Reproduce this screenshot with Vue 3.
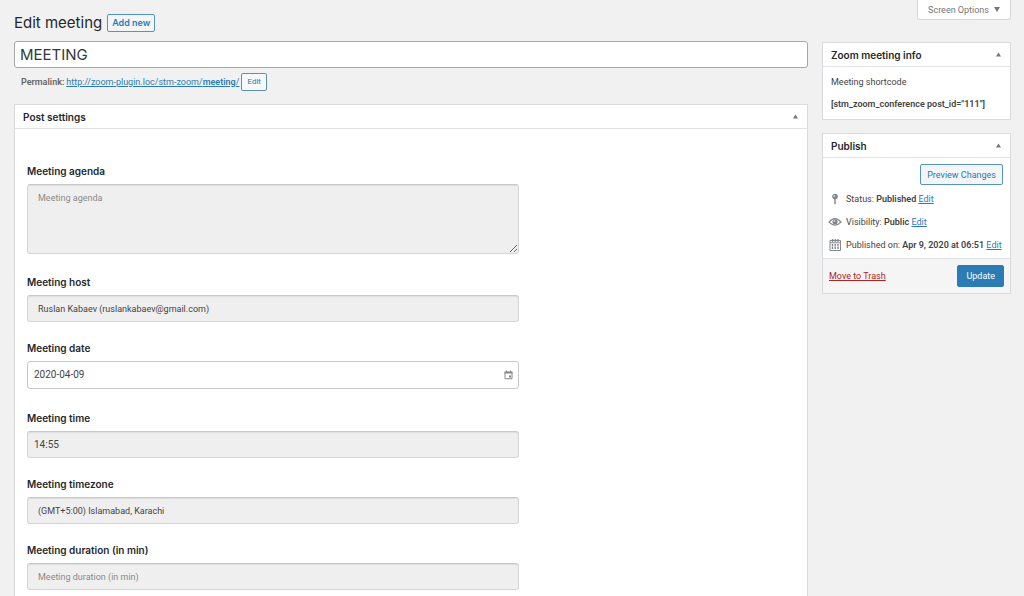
<script setup>
import { ref } from 'vue'

const title = ref('MEETING')
const agenda = ref('')
const host = ref('Ruslan Kabaev (ruslankabaev@gmail.com)')
const date = ref('2020-04-09')
const time = ref('14:55')
const timezone = ref('(GMT+5:00) Islamabad, Karachi')
const duration = ref('')
</script>

<template>
  <div class="wrap">
    <header class="top">
      <h1>Edit meeting</h1>
      <a href="#" class="add-new">Add new</a>
      <button type="button" class="screen-options">
        Screen Options
        <svg width="6" height="5" viewBox="0 0 6 5"><path d="M0 0h6L3 5z" fill="currentColor" /></svg>
      </button>
    </header>

    <div class="columns">
      <main class="main">
        <input v-model="title" class="title" type="text" aria-label="Title" />
        <div class="permalink">
          <strong>Permalink:</strong>
          <a href="#">http://zoom-plugin.loc/stm-zoom/<b>meeting</b>/</a>
          <button type="button" class="slug-edit">Edit</button>
        </div>

        <section class="box settings">
          <div class="box-head">
            <h2>Post settings</h2>
            <button type="button" class="toggle" aria-label="Toggle post settings">
              <svg width="5" height="5" viewBox="0 0 6 5"><path d="M0 5h6L3 0z" fill="currentColor" /></svg>
            </button>
          </div>
          <div class="fields">
            <div class="field agenda">
              <label for="agenda">Meeting agenda</label>
              <textarea id="agenda" v-model="agenda" placeholder="Meeting agenda"></textarea>
            </div>
            <div class="field">
              <label for="host">Meeting host</label>
              <select id="host" v-model="host" class="control indent">
                <option>Ruslan Kabaev (ruslankabaev@gmail.com)</option>
              </select>
            </div>
            <div class="field date">
              <label for="date">Meeting date</label>
              <div class="date-box">
                <input id="date" v-model="date" type="text" />
                <svg width="9" height="10" viewBox="0 0 18 20">
                  <path d="M2 4.5h14v13H2z" fill="none" stroke="#888" stroke-width="2" />
                  <path d="M1 3h16v4H1zM4 1h2v3H4zM12 1h2v3h-2zM10 11h4v4h-4z" fill="#888" />
                </svg>
              </div>
            </div>
            <div class="field">
              <label for="time">Meeting time</label>
              <input id="time" v-model="time" class="control time" type="text" />
            </div>
            <div class="field">
              <label for="timezone">Meeting timezone</label>
              <select id="timezone" v-model="timezone" class="control indent">
                <option>(GMT+5:00) Islamabad, Karachi</option>
              </select>
            </div>
            <div class="field">
              <label for="duration">Meeting duration (in min)</label>
              <input id="duration" v-model="duration" class="control indent" type="text" placeholder="Meeting duration (in min)" />
            </div>
          </div>
        </section>
      </main>

      <aside class="side">
        <section class="box">
          <div class="box-head">
            <h2>Zoom meeting info</h2>
            <button type="button" class="toggle" aria-label="Toggle meeting info">
              <svg width="5" height="5" viewBox="0 0 6 5"><path d="M0 5h6L3 0z" fill="currentColor" /></svg>
            </button>
          </div>
          <div class="info">
            <p>Meeting shortcode</p>
            <p><strong>[stm_zoom_conference post_id="111"]</strong></p>
          </div>
        </section>

        <section class="box">
          <div class="box-head">
            <h2>Publish</h2>
            <button type="button" class="toggle" aria-label="Toggle publish">
              <svg width="5" height="5" viewBox="0 0 6 5"><path d="M0 5h6L3 0z" fill="currentColor" /></svg>
            </button>
          </div>
          <div class="preview"><button type="button" class="preview-btn">Preview Changes</button></div>
          <ul class="status">
            <li>
              <svg width="14" height="14" viewBox="0 0 14 14">
                <circle cx="7" cy="4.5" r="2.8" fill="#82878c" />
                <path d="M6.3 6.5h1.4v5L7 12.8l-.7-1.3z" fill="#82878c" />
                <circle cx="6.3" cy="3.9" r="0.9" fill="#ddd" />
              </svg>
              <span>Status: <strong>Published</strong> <a href="#">Edit</a></span>
            </li>
            <li>
              <svg width="14" height="14" viewBox="0 0 14 14">
                <path d="M1 7.2Q7 .2 13 7.2Q7 13.2 1 7.2z" fill="#fff" stroke="#82878c" stroke-width="1.2" />
                <circle cx="7" cy="6.8" r="2.6" fill="#82878c" />
                <circle cx="6.3" cy="6" r="0.8" fill="#fff" />
              </svg>
              <span>Visibility: <strong>Public</strong> <a href="#">Edit</a></span>
            </li>
            <li>
              <svg width="14" height="14" viewBox="0 0 14 14">
                <path d="M2 2.5h10.5v10H2zM2 4.8h10.5" fill="none" stroke="#82878c" />
                <path d="M4.5 1v3M7.2 1v3M10 1v3" stroke="#82878c" stroke-width="1.3" />
                <path d="M4.5 6v5.5M7.2 6v5.5M10 6v5.5" stroke="#82878c" stroke-width="1.4" stroke-dasharray="2.3 .4" />
              </svg>
              <span>Published on: <strong>Apr 9, 2020 at 06:51</strong> <a href="#">Edit</a></span>
            </li>
          </ul>
          <div class="actions">
            <a href="#" class="trash">Move to Trash</a>
            <button type="button" class="update">Update</button>
          </div>
        </section>
      </aside>
    </div>
  </div>
</template>

<style>
html {
  scrollbar-width: none;
  background: #f1f1f1;
}
</style>

<style scoped>
.wrap,
.wrap * {
  box-sizing: border-box;
}
.wrap {
  min-height: 100vh;
  padding: 0 13px 0 14px;
  background: #f1f1f1;
  color: #444;
  font-family: Roboto, "Liberation Sans", sans-serif;
  font-size: 9px;
  line-height: 12px;
}
button,
input,
select,
textarea {
  font: inherit;
  color: inherit;
  margin: 0;
}
h1,
h2,
p,
ul {
  margin: 0;
  padding: 0;
}
h1,
h2,
.title,
.add-new,
.field label {
  font-family: Inter, "Liberation Sans", sans-serif;
}
strong,
b {
  font-weight: 600;
}
svg {
  flex: none;
}
a {
  color: #2b7bb0;
}
.top {
  display: flex;
  align-items: center;
  gap: 5px;
  height: 41px;
  padding-top: 4px;
}
h1 {
  color: #23282d;
  font-size: 15px;
  font-weight: 400;
  line-height: 20px;
}
.add-new {
  padding: 2px 4px;
  border: 1px solid #5595bd;
  border-radius: 2px;
  background: #f3f5f6;
  font-weight: 600;
  text-decoration: none;
}
.screen-options {
  display: flex;
  align-items: center;
  gap: 5px;
  align-self: flex-start;
  height: 20px;
  margin: -4px 0 0 auto;
  padding: 0 10px;
  border: 1px solid #d5d8db;
  border-top: 0;
  border-radius: 0 0 3px 3px;
  background: #fff;
  color: #72777c;
}
.columns {
  display: grid;
  grid-template-columns: minmax(0, 1fr) 189px;
  gap: 14px;
}
.title {
  display: block;
  width: 100%;
  height: 27px;
  padding: 0 5px;
  border: 1px solid #a5a8ab;
  border-radius: 3px;
  background: #fff;
  color: #32373c;
  font-size: 15px;
}
.permalink {
  display: flex;
  align-items: center;
  gap: 2px;
  height: 27px;
  padding-left: 7px;
  color: #666;
}
.slug-edit {
  height: 18px;
  padding: 0 5px;
  border: 1px solid #5595bd;
  border-radius: 2px;
  background: #f6f8f9;
  color: #2b7bb0;
  font-size: 8px;
}
.box {
  border: 1px solid #d9dcdf;
  background: #fff;
}
.settings {
  margin-top: 9px;
}
.box-head {
  display: flex;
  align-items: center;
  justify-content: space-between;
  height: 24px;
  padding: 0 9px 0 8px;
  border-bottom: 1px solid #dfe1e4;
}
h2 {
  color: #23282d;
  font-size: 10px;
  font-weight: 600;
  line-height: 12px;
}
.toggle {
  display: flex;
  padding: 0;
  border: 0;
  background: none;
  color: #72777c;
}
.fields {
  display: flex;
  flex-direction: column;
  gap: 20px;
  padding: 36px 12px 24px;
}
.field {
  display: flex;
  flex-direction: column;
  gap: 7px;
  width: 64%;
}
.field label {
  color: #23282d;
  font-size: 10px;
  font-weight: 600;
}
.agenda {
  padding-bottom: 2px;
}
textarea {
  display: block;
  width: 100%;
  height: 70px;
  padding: 7px 10px;
  border: 1px solid #d6d6d6;
  border-top-color: #c8c8c8;
  border-radius: 3px;
  background: #efefef;
  box-shadow: inset 0 1px 1px #ddd;
  resize: vertical;
}
textarea::placeholder,
.control::placeholder {
  color: #8a8a8a;
  opacity: 1;
}
.control {
  width: 100%;
  height: 27px;
  padding: 0 6px;
  border: 1px solid #d6d6d6;
  border-top-color: #c8c8c8;
  border-radius: 3px;
  background: #efefef;
  box-shadow: inset 0 1px 1px #ddd;
  appearance: none;
}
.indent {
  padding: 0 10px;
}
.time,
.date-box input {
  font-size: 10px;
}
.date {
  padding-bottom: 3px;
}
.date-box {
  display: flex;
  align-items: center;
  height: 28px;
  padding: 0 5px 0 6px;
  border: 1px solid #c8c8c8;
  border-radius: 3px;
  background: #fff;
}
.date-box input {
  flex: 1;
  min-width: 0;
  padding: 0;
  border: 0;
  background: none;
}
.side {
  display: flex;
  flex-direction: column;
  gap: 13px;
  padding-top: 1px;
}
.info {
  display: flex;
  flex-direction: column;
  gap: 10px;
  padding: 9px 8px;
}
.preview {
  display: flex;
  justify-content: flex-end;
  padding: 6px 7px 0;
}
.preview-btn {
  height: 21px;
  padding: 0 6px;
  border: 1px solid #5595bd;
  border-radius: 2px;
  background: #f3f5f6;
  color: #2b7bb0;
}
.status {
  display: flex;
  flex-direction: column;
  gap: 9px;
  padding: 7px 5px 6px;
  list-style: none;
}
.status li {
  display: flex;
  align-items: center;
  gap: 4px;
  white-space: nowrap;
}
.actions {
  display: flex;
  align-items: center;
  justify-content: space-between;
  padding: 6px;
  border-top: 1px solid #dfe1e4;
  background: #f5f5f5;
}
.trash {
  color: #b02524;
}
.update {
  height: 22px;
  padding: 0 8px;
  border: 1px solid #2b7bb5;
  border-radius: 2px;
  background: #2b7bb5;
  color: #fff;
}
</style>
